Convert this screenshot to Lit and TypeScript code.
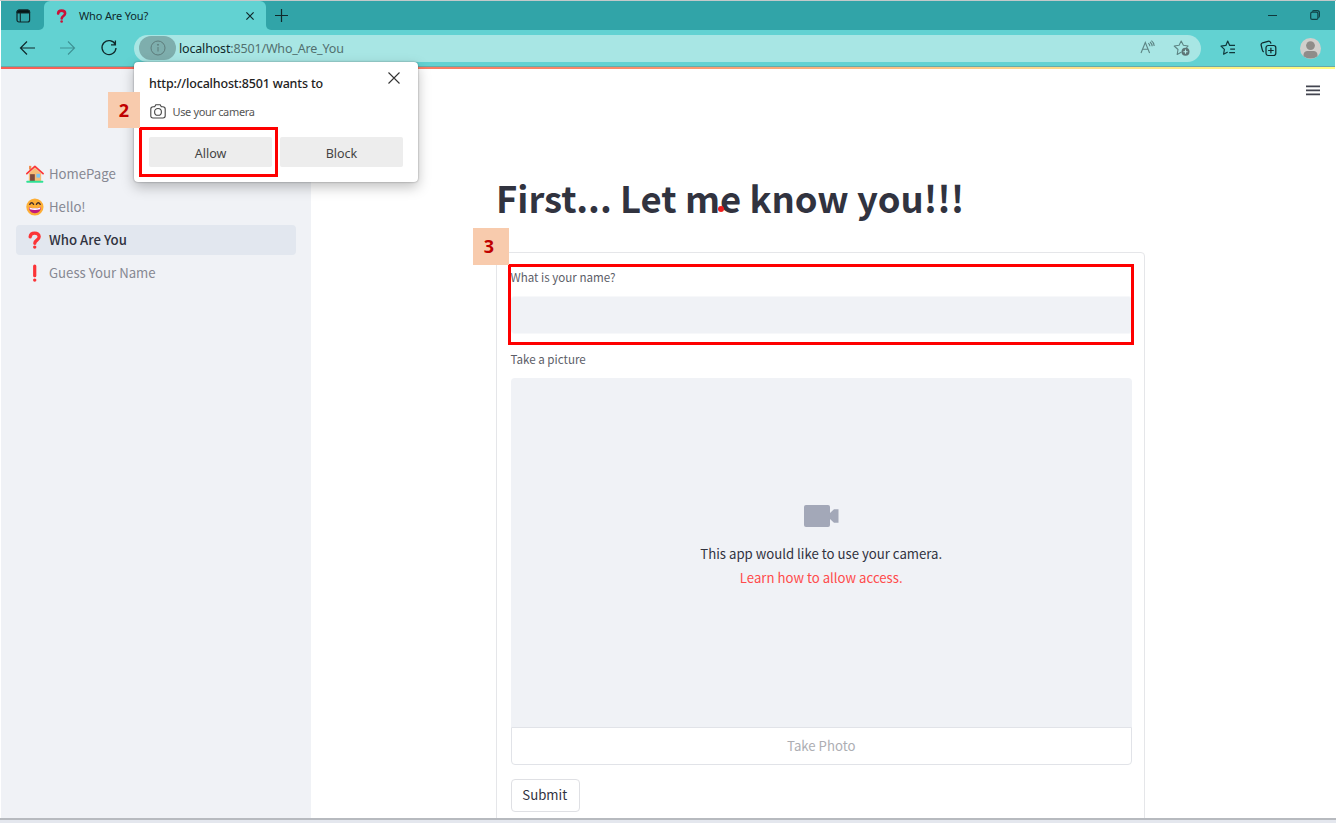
import { LitElement, html, css, svg } from "lit";
import { customElement, property } from "lit/decorators.js";
import { classMap } from "lit/directives/class-map.js";

const tabMenuIcon = html`<svg width="15" height="14" viewBox="0 0 15 14" fill="none" stroke="#10292b">
  <rect x="1" y="1" width="12.6" height="12" rx="2" stroke-width="1.2"/><path d="M1 3.2Q1 1 3 1h8.6q2 0 2 2.2v.8H1z" fill="#061416"/><path d="M4.3 4v9" stroke-width="1.1"/></svg>`;
const question = (color: string) => svg`<g fill="none" stroke=${color} stroke-width="3.5" stroke-linecap="round" stroke-linejoin="round">
  <path d="M4.4 6.2C4.6 3.5 6.5 2.2 9.1 2.2c2.8 0 4.8 1.5 4.8 3.9 0 3.4-4.6 3.5-4.6 6.8"/></g><circle cx="9.2" cy="17" r="1.8" fill=${color}/>`;
const emoji: Record<string, unknown> = {
  home: svg`<path d="M3 9 9.5 3 16 9v8.5H3z" fill="#f5bc77"/><path d="M3.2.9h2.4v4H3.2z" fill="#ef8b4c"/><path d="M.9 9.2 9.4 1.5l8.6 7.7" fill="none" stroke="#fc3636" stroke-width="1.8" stroke-linecap="round" stroke-linejoin="round"/><rect x="4.3" y="9.7" width="5" height="8" fill="#7d4a3d"/><rect x="11" y="9.3" width="3.8" height="4" fill="#78c5f5"/><rect x=".3" y="16.7" width="18" height="2" rx=".8" fill="#2fe195"/>`,
  smile: svg`<circle cx="9.4" cy="9.5" r="9.1" fill="#fdae36"/><path d="M3.2 9.8Q9.4 12 15.6 9.8C15.7 13.8 13.2 16 9.4 16S3.1 13.8 3.2 9.8z" fill="#c11a7d"/><path d="M3.6 10q5.8 1.8 11.6 0l-.4 2q-5.4 1.1-10.8 0z" fill="#fff"/><path d="M4 6.7Q6 3.2 8 6.7M11 6.7Q13 3.2 15 6.7" fill="none" stroke="#46302c" stroke-width="1.5" stroke-linecap="round"/>`,
  question: question("#fb3437"),
  bang: svg`<path d="M9.2 2.2v10.2" stroke="#fb3437" stroke-width="3.4" stroke-linecap="round"/><circle cx="9.2" cy="17" r="1.8" fill="#fb3437"/>`,
};

@customElement("browser-bar")
class BrowserBar extends LitElement {
  static styles = css`
    :host { display: block; color: #10292b; font-family: "Noto Sans", sans-serif; }
    svg { display: block; flex: none; overflow: visible; }
    .tabs { display: flex; height: 29px; background: #62d2d2; }
    .menu { width: 43px; box-sizing: border-box; padding: 8px 0 0 15px; background: #31a4a8; border-radius: 0 0 5px 0; }
    .tab { width: 222px; height: 29px; box-sizing: border-box; display: flex; align-items: center; background: #62d2d2; padding: 0 12px 0 11px; border-radius: 6px 6px 0 0; }
    .title { font-size: 11px; line-height: 16px; margin: 0 0 0 11px; flex: 1; letter-spacing: -.15px; }
    .tabwrap { background: #31a4a8; }
    .rest { flex: 1; display: flex; align-items: center; justify-content: space-between; background: #31a4a8; padding: 0 15px 0 9px; border-radius: 0 0 0 5px; }
    .win { display: flex; gap: 38px; align-items: center; }
    .win svg { margin-top: -1px; }
    .tools { display: flex; align-items: center; height: 36px; background: #62d2d2; padding: 0 14px 0 18px; }
    .nav { display: flex; gap: 25px; width: 115.5px; margin-left: -.5px; }
    .addr { display: flex; align-items: center; width: 1067px; height: 27px; box-sizing: border-box; border-radius: 14px; background: #a8e6e4; padding: 0 11.5px 0 5px; }
    .info { width: 37px; height: 24px; display: flex; align-items: center; justify-content: center; border-radius: 12px; background: #7eaead; }
    .url { flex: 1; margin: 1px 0 0 3px; font-size: 12.5px; line-height: 20px; color: #52706f; letter-spacing: -.17px; }
    .host { color: #10292b; }
    .acts { display: flex; gap: 17px; }
    .right { display: flex; flex: 1; justify-content: space-between; align-items: center; padding-left: 19px; }
  `;
  render() {
    return html`
      <div class="tabs">
        <div class="menu">${tabMenuIcon}</div>
        <div class="tabwrap"><div class="tab">
          <svg width="13" height="14" viewBox="2.5 0 13 19">${question("#cb1238")}</svg>
          <span class="title">Who Are You?</span>
          <svg width="8" height="8" viewBox="0 0 8 8" stroke="#10292b" stroke-width="1.2"><path d="M.4.4l7.2 7.2M7.6.4.4 7.6"/></svg>
        </div></div>
        <div class="rest">
          <svg width="13" height="13" viewBox="0 0 13 13" stroke="#10292b" stroke-width="1.2"><path d="M6.5 0v13M0 6.5h13"/></svg>
          <div class="win">
            <svg width="9" height="10" viewBox="0 0 9 10" stroke="#10383b"><path d="M5 5.5h9"/></svg>
            <svg width="10" height="10" viewBox="0 0 10 10" fill="none" stroke="#104347" stroke-width="1.2"><rect x=".7" y="2.2" width="7.2" height="7.2" rx="1.5"/><path d="M2.4 1.6Q2.8.6 4 .6h3.3q2.1 0 2.1 2.1V6q0 1.2-1 1.6"/></svg>
          </div>
        </div>
      </div>
      <div class="tools">
        <div class="nav">
          <svg width="16" height="16" viewBox="0 0 16 16" fill="none" stroke="#10292b" stroke-width="1.2"><path d="M16 8H1.5M8 1.5 1.5 8 8 14.5"/></svg>
          <svg width="16" height="16" viewBox="0 0 16 16" fill="none" stroke="#3e9294" stroke-width="1.1"><path d="M0 8h14.5M8 1.5 14.5 8 8 14.5"/></svg>
          <svg width="16" height="16" viewBox="0 0 16 16" fill="none" stroke="#10292b" stroke-width="1.3"><path d="M14.3 4.5A7 7 0 1 0 15 8M14.4.5v4.3H10"/></svg>
        </div>
        <div class="addr">
          <div class="info"><svg width="16" height="16" viewBox="0 0 16 16" fill="none" stroke="#5d7c7b"><circle cx="8" cy="8" r="7"/><path d="M8 7v4.5"/><circle cx="8" cy="4.8" r=".5" fill="#5d7c7b"/></svg></div>
          <div class="url"><span class="host">localhost</span>:8501/Who_Are_You</div>
          <div class="acts">
            <svg width="16" height="15" viewBox="0 0 16 15" fill="none" stroke="#5d8584" stroke-width="1.1"><path d="M1 13 5.3 2.5 9.6 13M2.6 9.3H8M8.3 3.2q1.5 1 1.6 3M10 2q2 1.6 2.2 4.3M11.4.6q2.6 1.9 2.8 5.4"/></svg>
            <svg width="17" height="16" viewBox="0 0 17 16" fill="none" stroke="#5d8584" stroke-width="1.1" stroke-linejoin="round"><path d="M8.5 12.1 4.2 14.4 5 9.5 1.2 6 6.1 5.2 8.2 1l2.2 4.2 4.7.8-1.7 1.9"/><circle cx="12.5" cy="11.7" r="4" fill="#5d7475" stroke="none"/><path d="M12.5 9.6v4.2M10.4 11.7h4.2" stroke="#b7efed"/></svg>
          </div>
        </div>
        <div class="right">
          <svg width="16" height="16" viewBox="0 0 16 16" fill="none" stroke="#10383b" stroke-width="1.2" stroke-linejoin="round"><path d="M7.7 11.9 3.6 14.2l.8-4.8L1 6.1l4.9-.7L7.7 1l2 4.4H15M10.2 9.2H15M9.2 12.7H15"/></svg>
          <svg width="17" height="17" viewBox="0 0 17 17" fill="none" stroke="#10292b" stroke-width="1.2"><rect x="6" y="5.5" width="9.8" height="10" rx="2.2"/><path d="M10.9 7.7v5.6M8.1 10.5h5.6M3.8 11.8Q2.7 11.5 2.3 9.8L1.1 5Q.8 3.4 2.5 2.8L8 1.3q1.8-.5 2.6 1.3l.4 1"/></svg>
          <svg width="21" height="21" viewBox="0 0 21 21"><circle cx="10.5" cy="10.5" r="10.5" fill="#d1cfcc"/><circle cx="10.5" cy="7.6" r="4.4" fill="#8f8c89"/><path d="M3.5 18.3Q3.2 13.3 7 13h7q3.8.3 3.5 5.3-2.9 2.2-7 2.2t-7-2.2z" fill="#8f8c89"/></svg>
        </div>
      </div>`;
  }
}

@customElement("side-nav")
class SideNav extends LitElement {
  @property({ attribute: false }) items = [
    { icon: "home", label: "HomePage" }, { icon: "smile", label: "Hello!" },
    { icon: "question", label: "Who Are You", active: true }, { icon: "bang", label: "Guess Your Name" },
  ];
  static styles = css`
    :host { display: block; background: #f0f2f6; box-sizing: border-box; padding: 90px 15px 0; }
    .item { display: flex; align-items: center; height: 30px; margin-bottom: 3.17px; padding-left: 10.2px; border-radius: 4px; color: #868892; font: 13.2px/20px "Noto Sans CJK SC", sans-serif; }
    .active { background: #e2e7ef; color: #31333f; font-weight: 500; }
    svg { display: block; margin-right: 4.8px; width: 18px; height: 18px; }
  `;
  render() {
    return this.items.map((i) => html`<div class=${classMap({ item: true, active: !!i.active })}>
      <svg viewBox="0 0 19 19">${emoji[i.icon]}</svg><span>${i.label}</span></div>`);
  }
}

@customElement("permission-popup")
class PermissionPopup extends LitElement {
  static styles = css`
    :host { display: block; box-sizing: border-box; background: #fff; border-radius: 4px; padding: 7px 15px 0; font-family: "Noto Sans", sans-serif; box-shadow: 0 5px 13px rgba(0,0,0,.25), 0 0 2px rgba(0,0,0,.4); }
    .head { display: flex; justify-content: space-between; height: 24px; }
    .title { font-size: 12.5px; line-height: 20px; color: #222; margin-top: 5px; letter-spacing: -.17px; font-weight: 500; }
    .head svg { margin: 3px 3px 0 0; }
    .ask { display: flex; align-items: center; height: 20px; margin-top: 8px; padding-left: .5px; gap: 7px; font-size: 11px; letter-spacing: -.35px; color: #555; }
    .btns { display: grid; grid-template-columns: 1fr 1fr; gap: 8px; margin-top: 16px; }
    .btn { display: flex; align-items: center; justify-content: center; height: 30px; box-sizing: border-box; padding-top: 3px; background: #ededed; border-radius: 2px; color: #444; font-size: 12.5px; line-height: 19px; }
    svg { display: block; }
  `;
  render() {
    return html`<div class="head"><span class="title">http://localhost:8501 wants to</span>
        <svg width="12" height="12" viewBox="0 0 12 12" stroke="#333" stroke-width="1.1"><path d="M.5.5l11 11M11.5.5l-11 11"/></svg></div>
      <div class="ask"><svg width="16" height="15" viewBox="0 0 16 15" fill="none" stroke="#444" stroke-width="1.1"><path d="M3.2 2.8h1.5L5.8.8h4.4l1.1 2h1.5q2.4 0 2.4 2.2v6.8q0 2.2-2.2 2.2H3Q.8 14 .8 11.8V5Q.8 2.8 3.2 2.8z"/><circle cx="8" cy="7.9" r="3.4"/></svg><span>Use your camera</span></div>
      <div class="btns"><div class="btn">Allow</div><div class="btn">Block</div></div>`;
  }
}

@customElement("camera-form")
class CameraForm extends LitElement {
  static styles = css`
    :host { display: block; font-family: "Noto Sans CJK SC", sans-serif; color: #31333f; }
    h1 { margin: 0; font-size: 36.45px; line-height: 48px; font-weight: 700; white-space: nowrap; }
    .form { margin-top: 31px; box-sizing: border-box; height: 640px; border: 1px solid #e5e6e9; border-radius: 4px; padding: 14px 12px 0 13.5px; display: flex; flex-direction: column; }
    .label { font-size: 11.6px; line-height: 20px; color: #5c5e68; }
    .input { height: 38px; box-sizing: border-box; background: #f0f2f6; border: solid #f7f8fa; border-width: 1px 0; border-radius: 4px; margin: 9px 0 15px; }
    .cam { height: 349px; box-sizing: border-box; background: #f0f2f6; border-radius: 4px 4px 0 0; margin-top: 9px; padding-top: 127px; display: flex; flex-direction: column; align-items: center; font-size: 13.2px; line-height: 24px; }
    .cam svg { display: block; margin-bottom: 15px; }
    .link { color: #ff4b4b; }
    .photo { display: flex; align-items: center; justify-content: center; height: 38px; box-sizing: border-box; border: 1px solid #e1e3e8; border-radius: 0 0 4px 4px; color: #adaeb3; font-size: 13.2px; line-height: 20px; }
    .submit { display: flex; align-items: center; justify-content: center; margin-top: 14px; width: 69.5px; height: 33px; box-sizing: border-box; border: 1px solid #dfe0e4; border-radius: 4px; font-size: 13.2px; line-height: 20px; padding: 0 1px 1px 0; }
  `;
  render() {
    return html`<h1>First... Let me know you!!!</h1>
      <div class="form">
        <div class="label">What is your name?</div><div class="input"></div>
        <div class="label">Take a picture</div>
        <div class="cam"><svg width="35" height="22" viewBox="0 0 35 22" fill="#a3a8b8"><rect width="26" height="22" rx="2"/><path d="M25.5 8.5 30 4.3h4.5v13.4H30l-4.5-4.2z"/></svg>
          <span>This app would like to use your camera.</span><span class="link">Learn how to allow access.</span></div>
        <div class="photo">Take Photo</div>
        <div class="submit">Submit</div>
      </div>`;
  }
}

@customElement("app-root")
class AppRoot extends LitElement {
  static styles = css`
    :host { display: block; position: relative; width: 1336px; height: 823px; overflow: hidden; background: #fff; }
    .window { height: 818px; box-sizing: border-box; border-top: 1px solid #c3c9ca; padding: 0 1px; overflow: hidden; display: flex; flex-direction: column; }
    .rule { flex: none; height: 1px; background: #6aa9a8; }
    .accent { flex: none; height: 2px; background: linear-gradient(90deg, #f65e55, #f98868 45%, #fcd48c 75%, #fffd80); }
    .body { display: flex; flex: 1; min-height: 0; }
    .side { width: 309.5px; flex: none; }
    main { flex: 1; display: flex; padding: 104px 0 0 185.5px; overflow: hidden; }
    camera-form { width: 649px; }
    .burger { margin: -88px 0 0 159px; padding-left: 2px; }
    .foot { height: 5px; box-sizing: border-box; background: #e4e7ee; border-top: 2px solid #b7babf; }
    .popup { position: absolute; left: 134px; top: 62px; width: 284px; height: 120px; }
    .mark { position: absolute; box-sizing: border-box; border: 3px solid #fe0000; }
    .allow { left: 139px; top: 127px; width: 139px; height: 50px; }
    .name { left: 508px; top: 264px; width: 626px; height: 81px; }
    .badge { position: absolute; width: 36px; height: 36px; display: flex; align-items: center; justify-content: center; background: #f8cbad; color: #c00000; font: bold 18px "Open Sans", sans-serif; box-sizing: border-box; }
    .two { left: 108px; top: 92px; width: 32px; }
    .three { left: 473px; top: 228px; height: 37px; padding: 0 4px 1px 0; }
    .dot { position: absolute; left: 718px; top: 206px; width: 6px; height: 6px; border-radius: 50%; background: #f01c1c; }
  `;
  render() {
    return html`
      <div class="window">
        <browser-bar></browser-bar><div class="rule"></div><div class="accent"></div>
        <div class="body">
          <side-nav class="side"></side-nav>
          <main><camera-form></camera-form>
            <svg class="burger" width="14" height="11" viewBox="0 0 14 11" stroke="#42444f" stroke-width="1.7"><path d="M0 1.3h14M0 5.3h14M0 9.3h14"/></svg>
          </main>
        </div>
      </div>
      <div class="foot"></div>
      <permission-popup class="popup"></permission-popup>
      <div class="mark allow"></div><div class="mark name"></div>
      <div class="badge two">2</div><div class="badge three">3</div><div class="dot"></div>`;
  }
}
